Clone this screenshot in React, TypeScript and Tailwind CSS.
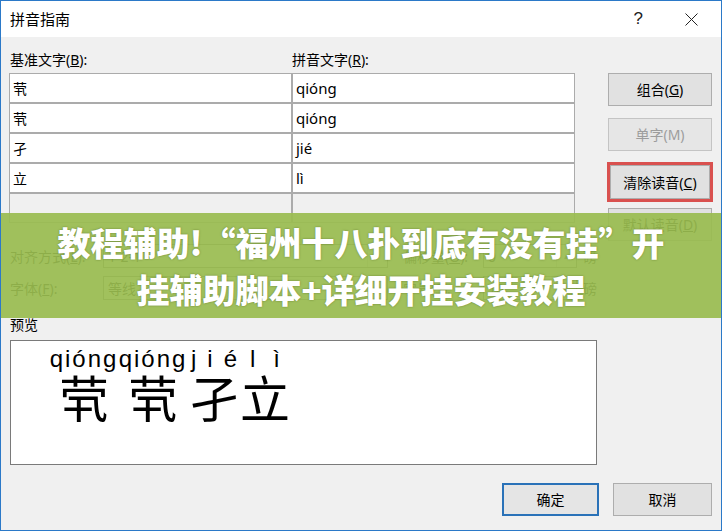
import React from "react";

const ui = { fontFamily: "'Noto Sans', 'Noto Sans CJK SC', sans-serif" };
const cjk = { fontFamily: "'Noto Sans CJK SC', sans-serif" };
const arial = { fontFamily: "'Liberation Sans', Arial, sans-serif" };

const rows = [
  { base: "茕", ruby: "qióng" },
  { base: "茕", ruby: "qióng" },
  { base: "孑", ruby: "jié" },
  { base: "立", ruby: "lì" },
  { base: "", ruby: "" },
];

function Btn({ children, disabled, className = "" }: { children: React.ReactNode; disabled?: boolean; className?: string }) {
  return (
    <div
      className={`flex h-[33px] w-[104px] items-center justify-center border text-[14px] ${
        disabled ? "border-[#c4c4c4] bg-[#e6e6e6] text-[#9d9d9d]" : "border-[#adadad] bg-[#e1e1e1] text-black"
      } ${className}`}
    >
      {children}
    </div>
  );
}

function Combo({ text, w, spin }: { text: string; w: string; spin?: boolean }) {
  return (
    <div className={`flex h-[24px] ${w} items-center border border-[#7a7a7a] bg-white text-[14px]`}>
      <span className="flex-1 pl-[4px]">{text}</span>
      <span className="flex h-full w-[20px] items-center justify-center border-l border-[#d0d0d0] text-[9px] text-[#555]">
        {spin ? "▴" : "▾"}
      </span>
    </div>
  );
}

export default function App() {
  return (
    <div className="relative h-[531px] w-[722px] overflow-hidden border border-[#2b79c8] bg-[#f0f0f0] text-black" style={ui}>
      {/* title bar */}
      <div className="flex h-[36px] items-center bg-white pl-[9px]">
        <span className="text-[15px]" style={cjk}>拼音指南</span>
        <span className="ml-auto mr-[42px] text-[17px] font-light text-[#222]" style={arial}>?</span>
        <svg width="13" height="13" viewBox="0 0 13 13" className="mr-[23px]">
          <path d="M0.5 0.5L12.5 12.5M12.5 0.5L0.5 12.5" stroke="#222" strokeWidth="1" />
        </svg>
      </div>

      <div className="px-[8px]">
        {/* top section */}
        <div className="flex pt-[13px]">
          <div className="w-[566px]">
            <div className="grid h-[20px] grid-cols-[282px_284px] items-center text-[14px] leading-[20px]">
              <span className="pl-[1px]">基准文字(<u>B</u>):</span>
              <span className="pl-[1px]">拼音文字(<u>R</u>):</span>
            </div>
            <div className="mt-[3px] grid grid-cols-[281px_281px] gap-[2px] bg-[#ababab] p-[1px]">
              {rows.map((r, i) => (
                <React.Fragment key={i}>
                  <div className={`flex h-[28px] items-center pl-[3px] text-[14px] ${r.base || i < 4 ? "bg-white" : "bg-[#f0f0f0]"}`} style={cjk}>
                    {r.base}
                  </div>
                  <div className={`flex h-[28px] items-center pl-[3px] text-[15px] ${i < 4 ? "bg-white" : "bg-[#f0f0f0]"}`}>
                    {r.ruby}
                  </div>
                </React.Fragment>
              ))}
            </div>
          </div>
          <div className="ml-[33px] flex flex-col pt-[23px]">
            <Btn>组合(<u>G</u>)</Btn>
            <Btn disabled className="mt-[12px]">单字(M)</Btn>
            <div className="-mx-[1px] mt-[11px] h-[40px] w-[106px] border-[3px] border-[#d9514f]">
              <div className="flex h-full w-full items-center justify-center border border-[#adadad] bg-[#e1e1e1] text-[14px]">
                清除读音(<u>C</u>)
              </div>
            </div>
            <Btn className="mt-[6px]">默认读音(<u>D</u>)</Btn>
          </div>
        </div>

        {/* option rows (under banner) */}
        <div className="mt-[3px] flex items-center text-[14px]">
          <span className="w-[94px] pl-[1px]">对齐方式(<u>L</u>):</span>
          <Combo text="1-2-1" w="w-[285px]" />
          <span className="ml-[15px] w-[80px]">偏移量(<u>O</u>):</span>
          <Combo text="0" w="w-[94px]" spin />
          <span className="ml-[6px]">磅</span>
        </div>
        <div className="mt-[8px] flex items-center text-[14px]">
          <span className="w-[94px] pl-[1px]">字体(<u>F</u>):</span>
          <Combo text="等线" w="w-[285px]" />
          <span className="ml-[15px] w-[80px]">字号(<u>S</u>):</span>
          <Combo text="10" w="w-[94px]" />
          <span className="ml-[6px]">磅</span>
        </div>

        {/* preview */}
        <div className="mt-[16px] h-[18px] pl-[1px] text-[14px] leading-[18px]">预览</div>
        <div className="ml-[1px] mt-[6px] h-[125px] w-[587px] border border-[#7a7a7a] bg-white pl-[39px] pt-[6px]">
          <div className="flex">
            {[
              { w: "w-[68px]", py: ["qióng"], ch: "茕" },
              { w: "w-[70px]", py: ["qióng"], ch: "茕" },
              { w: "w-[52px]", py: ["j", "i", "é"], ch: "孑", pad: "px-[3px]" },
              { w: "w-[50px]", py: ["l", "ì"], ch: "立", pad: "px-[10px]" },
            ].map((c, i) => (
              <div key={i} className={`${c.w} flex flex-col`}>
                <div
                  className={`flex h-[24px] text-[24px] leading-[24px] ${c.py.length > 1 ? `justify-between ${c.pad}` : "justify-center tracking-[2px]"}`}
                  style={arial}
                >
                  {c.py.map((p, j) => (
                    <span key={j}>{p}</span>
                  ))}
                </div>
                <div className="h-[50px] text-center text-[50px] leading-[50px]" style={cjk}>
                  {c.ch}
                </div>
              </div>
            ))}
          </div>
        </div>

        {/* footer */}
        <div className="mt-[18px] flex justify-end pr-[1px]">
          <div className="flex h-[33px] w-[97px] items-center justify-center border-2 border-[#2a72b8] bg-[#e5e5e5] text-[14px]">确定</div>
          <div className="ml-[14px] flex h-[33px] w-[99px] items-center justify-center border border-[#adadad] bg-[#e1e1e1] text-[14px]">取消</div>
        </div>
      </div>

      {/* banner overlay */}
      <div className="absolute left-0 right-0 top-[212px] flex h-[105px] items-center justify-center bg-[#99bc4f]/[0.92]">
        <p
          className="text-center text-[33px] font-black leading-[47px] text-white [text-shadow:0_0_2px_rgba(60,80,20,0.6)]"
          style={cjk}
        >
          教程辅助!“福州十八扑到底有没有挂”开
          <br />
          挂辅助脚本+详细开挂安装教程
        </p>
      </div>
    </div>
  );
}
